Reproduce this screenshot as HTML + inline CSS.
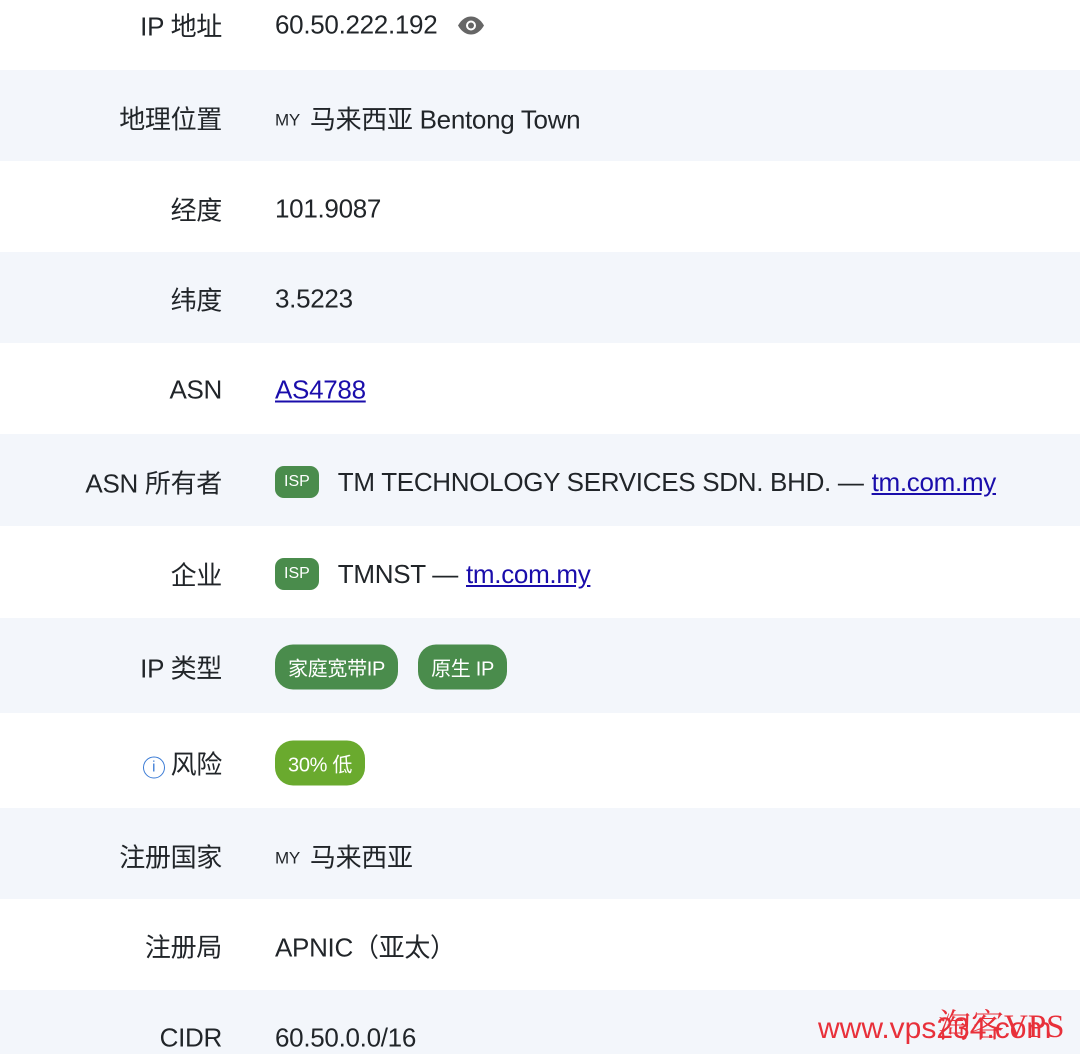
<!DOCTYPE html><html><head><meta charset="utf-8"><style>
body{margin:0;width:1080px;height:1054px;overflow:hidden;background:#fff;font-family:"Liberation Sans","Noto Sans CJK SC",sans-serif;color:#212529;font-size:26px;position:relative}
.r{position:absolute;left:0;width:1080px}
.g{background:#f3f6fb}
.l{position:absolute;right:858px;white-space:nowrap;transform:translateY(-50%);letter-spacing:-0.3px}
.v{position:absolute;left:275px;white-space:nowrap;transform:translateY(-50%);display:flex;align-items:center;letter-spacing:-0.3px}
a{color:#1a0dab;text-decoration:underline}
.b{background:#4a8c4c;color:#fff;border-radius:9px;font-size:16px;padding:7px 9px;margin-right:19px;letter-spacing:0}
.p{background:#4a8c4c;color:#fff;border-radius:18px;font-size:20px;padding:8px 13px;margin-right:20px;letter-spacing:-0.3px}
.sm{font-size:17px;margin-right:10px;margin-top:4px}
</style></head><body>
<div class="r" style="top:0;height:70px"></div>
<div class="r g" style="top:70px;height:91px"></div>
<div class="r g" style="top:252px;height:91px"></div>
<div class="r g" style="top:434px;height:92px"></div>
<div class="r g" style="top:618px;height:95px"></div>
<div class="r g" style="top:808px;height:91px"></div>
<div class="r g" style="top:990px;height:64px"></div>

<div class="l" style="top:25px">IP 地址</div><div class="v" style="top:25px">60.50.222.192<svg style="margin-left:20px" width="28" height="20" viewBox="0 0 28 20"><path d="M1 10C5 3 10 1 14 1s9 2 13 9c-4 7-9 9-13 9S5 17 1 10z" fill="#666"/><circle cx="14" cy="10" r="5" fill="#fff"/><circle cx="14" cy="10" r="3" fill="#666"/></svg></div>
<div class="l" style="top:118px">地理位置</div><div class="v" style="top:118px"><span class="sm">MY</span>马来西亚 Bentong Town</div>
<div class="l" style="top:209px">经度</div><div class="v" style="top:209px">101.9087</div>
<div class="l" style="top:299px">纬度</div><div class="v" style="top:299px">3.5223</div>
<div class="l" style="top:390px">ASN</div><div class="v" style="top:390px"><a>AS4788</a></div>
<div class="l" style="top:482px">ASN 所有者</div><div class="v" style="top:482px"><span class="b">ISP</span>TM TECHNOLOGY SERVICES SDN. BHD. — <a style="margin-left:8px">tm.com.my</a></div>
<div class="l" style="top:574px">企业</div><div class="v" style="top:574px"><span class="b">ISP</span>TMNST — <a style="margin-left:8px">tm.com.my</a></div>
<div class="l" style="top:667px">IP 类型</div><div class="v" style="top:667px"><span class="p">家庭宽带IP</span><span class="p">原生 IP</span></div>
<div class="l" style="top:763px"><span style="display:inline-block;width:20px;height:20px;border:1.5px solid #3a7bd5;border-radius:50%;color:#3a7bd5;font-size:15px;text-align:center;line-height:20px;vertical-align:2px;margin-right:6px">i</span>风险</div><div class="v" style="top:763px"><span class="p" style="background:#6aaa2e">30% 低</span></div>
<div class="l" style="top:856px">注册国家</div><div class="v" style="top:856px"><span class="sm">MY</span>马来西亚</div>
<div class="l" style="top:946px">注册局</div><div class="v" style="top:946px">APNIC（亚太）</div>
<div class="l" style="top:1038px">CIDR</div><div class="v" style="top:1038px">60.50.0.0/16</div>
<div style="position:absolute;left:818px;top:1012px;color:#e8303a;font-size:30px;font-family:'Liberation Sans',sans-serif">www.vps234.com</div>
<div style="position:absolute;left:938px;top:1000px;color:#e8303a;font-size:33px;font-family:'Liberation Serif','Noto Serif CJK SC',serif">淘客VPS</div>
</body></html>
